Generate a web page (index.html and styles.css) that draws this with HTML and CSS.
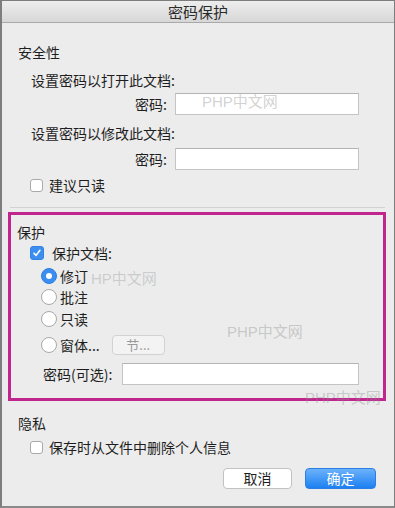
FILE: index.html
```html
<!DOCTYPE html>
<html lang="zh-CN">
<head>
<meta charset="utf-8">
<title>密码保护</title>
<link rel="stylesheet" href="styles.css">
</head>
<body>
<div class="window">
  <div class="titlebar">密码保护</div>
  <div class="content">
    <div class="row heading">安全性</div>
    <div class="row sub">设置密码以打开此文档:</div>
    <div class="field-row first">
      <span class="field-label">密码:</span>
      <span class="input"></span>
    </div>
    <div class="row sub gap-lg">设置密码以修改此文档:</div>
    <div class="field-row second">
      <span class="field-label">密码:</span>
      <span class="input"></span>
    </div>
    <label class="row check-row readonly"><span class="checkbox"></span>建议只读</label>
    <div class="separator"></div>

    <div class="protect-box">
      <div class="row heading-in">保护</div>
      <label class="row check-row prot"><span class="checkbox checked"><svg viewBox="0 0 14 14" width="14" height="14"><path d="M3.6 7.4 L6 9.8 L10.4 3.8" fill="none" stroke="#fff" stroke-width="1.8" stroke-linecap="round" stroke-linejoin="round"/></svg></span>保护文档:</label>
      <label class="row radio-row r1"><span class="radio on"></span>修订</label>
      <label class="row radio-row r2"><span class="radio"></span>批注</label>
      <label class="row radio-row r3"><span class="radio"></span>只读</label>
      <div class="row radio-row r4"><span class="radio"></span>窗体...<span class="btn-disabled">节...</span></div>
      <div class="opt-row">
        <span class="opt-label">密码(可选):</span>
        <span class="input"></span>
      </div>
    </div>

    <div class="row heading privacy">隐私</div>
    <label class="row check-row remove"><span class="checkbox"></span>保存时从文件中删除个人信息</label>
    <div class="buttons">
      <button class="btn cancel">取消</button>
      <button class="btn ok">确定</button>
    </div>
  </div>
  <span class="wm wm1">PHP中文网</span>
  <span class="wm wm2">HP中文网</span>
  <span class="wm wm3">PHP中文网</span>
  <span class="wm wm4">PHP中文网</span>
</div>
</body>
</html>
```
FILE: styles.css
```css
* { box-sizing: border-box; }
html, body { margin: 0; padding: 0; }
body {
  font-family: "Noto Sans CJK SC", "Noto Sans", sans-serif;
  font-size: 14px;
  color: #1e1e1e;
  background: #ececec;
}
.window {
  position: relative;
  width: 395px;
  height: 508px;
  border: 1px solid #7d7d7d;
  border-left-width: 2px;
  border-bottom: 2px solid #8a8a8a;
  background: #ececec;
  overflow: hidden;
}
.titlebar {
  height: 22px;
  line-height: 21px;
  text-align: center;
  font-size: 15px;
  color: #2a2a2a;
  background: linear-gradient(#ededed, #d7d7d7);
  border-bottom: 1px solid #a9a9a9;
}
.content {
  padding: 19px 18px 0 16px;
  display: flex;
  flex-direction: column;
}
.row {
  height: 20px;
  display: flex;
  align-items: center;
  line-height: 20px;
}
.sub { padding-left: 13px; margin-top: 8px; }
.gap-lg { margin-top: 8px; }
.field-row {
  display: flex;
  align-items: center;
  height: 22px;
}
.field-row.first { margin-top: 3px; }
.field-row.second { margin-top: 5px; }
.field-label {
  width: 157px;
  text-align: right;
  padding-right: 8px;
}
.input {
  display: block;
  width: 184px;
  height: 22px;
  background: #fff;
  border: 1px solid #c4c4c4;
  border-top-color: #b4b4b4;
}
.check-row { padding-left: 12px; }
.readonly { margin-top: 5px; }
.checkbox {
  width: 13px;
  height: 13px;
  border: 1px solid #a9a9a9;
  border-radius: 3px;
  background: #fff;
  margin-right: 6px;
  display: flex;
  align-items: center;
  justify-content: center;
}
.checkbox.checked {
  background: #3c8ff0;
  border-color: #3280e0;
  width: 14px;
  height: 14px;
  margin-right: 8px;
}
.separator {
  height: 1px;
  background: #d2d2d2;
  margin: 12px -9px 0 -8px;
}
.protect-box {
  margin: 4px -10px 0 -10px;
  border: 3px solid #c1268e;
  padding: 7px 0 13px 6px;
  display: flex;
  flex-direction: column;
}
.protect-box .check-row { padding-left: 13px; margin-top: 1px; }
.radio-row { padding-left: 24px; }
.r1 { margin-top: 3px; }
.r2 { margin-top: 1px; }
.r3 { margin-top: 2px; }
.r4 { margin-top: 6px; }
.radio {
  width: 16px;
  height: 16px;
  border-radius: 50%;
  background: #fff;
  border: 1px solid #a8a8a8;
  margin-right: 3px;
  display: flex;
  align-items: center;
  justify-content: center;
}
.radio.on {
  background: #3a8ef0;
  border-color: #2f7fe0;
}
.radio.on::after {
  content: "";
  width: 6px;
  height: 6px;
  border-radius: 50%;
  background: #fff;
}
.btn-disabled {
  margin-left: 12px;
  width: 53px;
  height: 20px;
  border: 1px solid #d2d2d2;
  border-radius: 4px;
  background: #f3f3f3;
  color: #9a9a9a;
  font-size: 13px;
  display: flex;
  align-items: center;
  justify-content: center;
}
.opt-row {
  display: flex;
  align-items: center;
  height: 22px;
  margin-top: 8px;
  padding-left: 26px;
}
.opt-label { width: 79px; }
.opt-row .input { width: 237px; }
.privacy { margin-top: 12px; }
.remove { margin-top: 4px; }
.buttons {
  display: flex;
  justify-content: flex-end;
  gap: 13px;
  margin-top: 11px;
  padding-right: 0;
}
.btn {
  font-family: "Noto Sans CJK SC", "Noto Sans", sans-serif;
  font-size: 14px;
  height: 21px;
  border-radius: 4px;
  padding: 0;
  line-height: 19px;
}
.cancel {
  width: 69px;
  background: #fff;
  border: 1px solid #c2c2c2;
  color: #1e1e1e;
}
.ok {
  width: 71px;
  background: linear-gradient(#6cb2fb, #1d80f1);
  border: 1px solid #2a7fe6;
  color: #fff;
}
.wm {
  position: absolute;
  font-family: "Liberation Sans", "Noto Sans CJK SC", sans-serif;
  font-size: 15px;
  color: rgba(140, 140, 140, 0.4);
  white-space: nowrap;
  pointer-events: none;
}
.wm1 { left: 200px; top: 89px; }
.wm2 { left: 89px; top: 266px; color: rgba(140,140,140,0.35); }
.wm3 { left: 225px; top: 319px; }
.wm4 { left: 303px; top: 385px; }
```
